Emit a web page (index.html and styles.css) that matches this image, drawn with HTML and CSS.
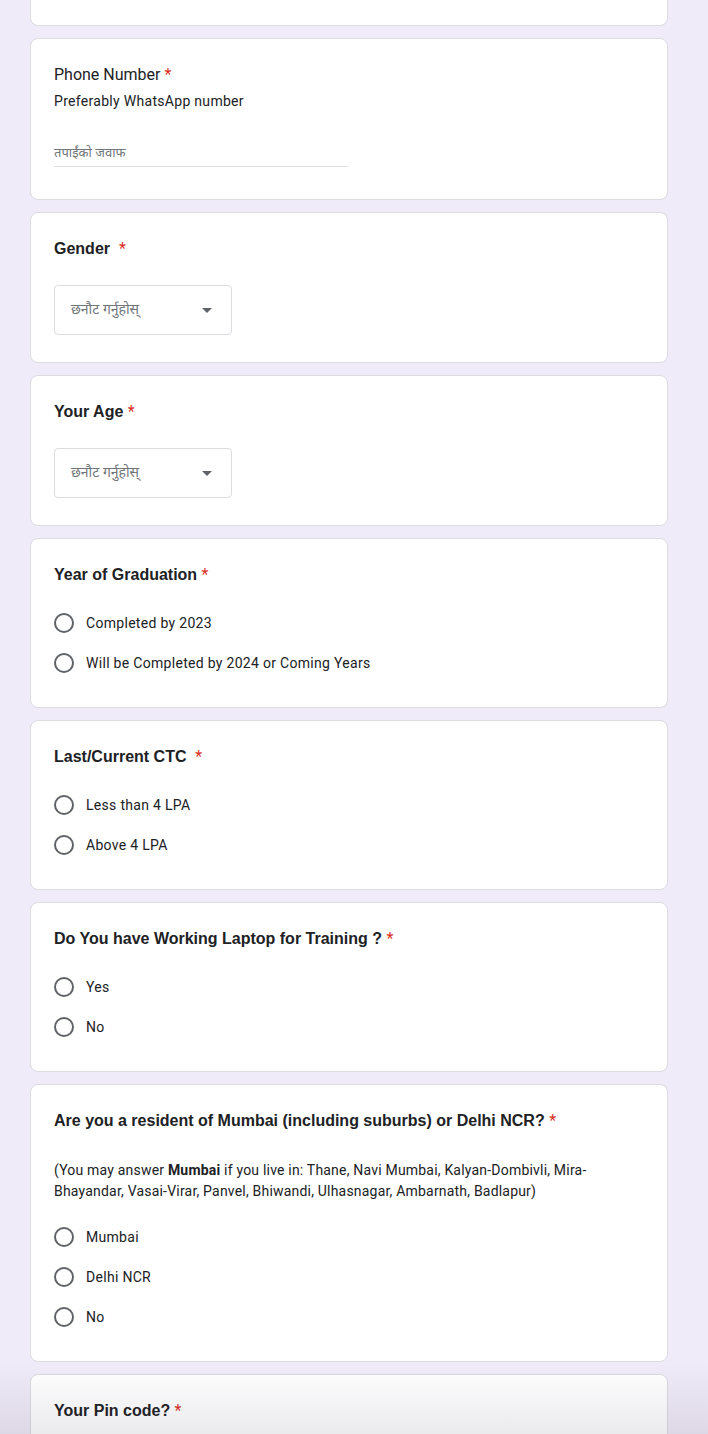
FILE: index.html
```html
<!DOCTYPE html>
<html lang="en">
<head>
<meta charset="utf-8">
<link rel="stylesheet" href="styles.css">
</head>
<body>
<div class="form">
  <div class="card card-top"></div>

  <div class="card card-phone">
    <div class="title title-plain">Phone Number <span class="req">*</span></div>
    <div class="desc">Preferably WhatsApp number</div>
    <div class="text-input">तपाईंको जवाफ</div>
  </div>

  <div class="card">
    <div class="title">Gender &nbsp;<span class="req">*</span></div>
    <div class="select"><span class="select-text">छनौट गर्नुहोस्</span><span class="caret"></span></div>
  </div>

  <div class="card">
    <div class="title">Your Age <span class="req">*</span></div>
    <div class="select"><span class="select-text">छनौट गर्नुहोस्</span><span class="caret"></span></div>
  </div>

  <div class="card">
    <div class="title">Year of Graduation <span class="req">*</span></div>
    <div class="options">
      <div class="option"><span class="radio"></span>Completed by 2023</div>
      <div class="option"><span class="radio"></span>Will be Completed by 2024 or Coming Years</div>
    </div>
  </div>

  <div class="card">
    <div class="title">Last/Current CTC &nbsp;<span class="req">*</span></div>
    <div class="options">
      <div class="option"><span class="radio"></span>Less than 4 LPA</div>
      <div class="option"><span class="radio"></span>Above 4 LPA</div>
    </div>
  </div>

  <div class="card">
    <div class="title">Do You have Working Laptop for Training ? <span class="req">*</span></div>
    <div class="options">
      <div class="option"><span class="radio"></span>Yes</div>
      <div class="option"><span class="radio"></span>No</div>
    </div>
  </div>

  <div class="card">
    <div class="title">Are you a resident of Mumbai (including suburbs) or Delhi NCR? <span class="req">*</span></div>
    <div class="long-desc">(You may answer <b>Mumbai</b> if you live in: Thane, Navi Mumbai, Kalyan-Dombivli, Mira-Bhayandar, Vasai-Virar, Panvel, Bhiwandi, Ulhasnagar, Ambarnath, Badlapur)</div>
    <div class="options options-after-desc">
      <div class="option"><span class="radio"></span>Mumbai</div>
      <div class="option"><span class="radio"></span>Delhi NCR</div>
      <div class="option"><span class="radio"></span>No</div>
    </div>
  </div>

  <div class="card">
    <div class="title">Your Pin code? <span class="req">*</span></div>
    <div class="text-input">तपाईंको जवाफ</div>
  </div>
</div>
<div class="bottom-fade"></div>
</body>
</html>
```

FILE: styles.css
```css
html, body {
  margin: 0;
  padding: 0;
  background: #f0ebf8;
  height: 1434px;
  overflow: hidden;
}

body {
  font-family: Roboto, "Noto Sans", Arial, sans-serif;
  color: #202124;
}

.form {
  width: 638px;
  margin-left: 30px;
  display: flex;
  flex-direction: column;
  gap: 12px;
}

.card {
  box-sizing: border-box;
  background: #fff;
  border: 1px solid #dadce0;
  border-radius: 8px;
  padding: 24px 23px 24px;
}

.card-top {
  height: 26px;
  padding: 0;
  border-top: none;
  border-top-left-radius: 0;
  border-top-right-radius: 0;
}

.card-phone {
  padding-bottom: 32px;
}

.title {
  font-family: "Liberation Sans", Arial, sans-serif;
  font-weight: bold;
  font-size: 16px;
  line-height: 24px;
}

.title-plain {
  font-family: Roboto, Arial, sans-serif;
  font-weight: 400;
}

.req {
  color: #d93025;
  font-family: Roboto, Arial, sans-serif;
  font-weight: 400;
}

.desc {
  font-size: 14px;
  line-height: 20px;
  margin-top: 4px;
  letter-spacing: 0.3px;
}

.text-input {
  width: 294px;
  height: 20px;
  margin-top: 33px;
  padding-bottom: 2px;
  border-bottom: 1px solid #e0e0e0;
  font-family: "Noto Sans Devanagari", "Noto Sans", "Lohit Devanagari", sans-serif;
  font-size: 13px;
  line-height: 20px;
  color: #70757a;
  overflow: hidden;
}

.select {
  box-sizing: border-box;
  width: 178px;
  height: 50px;
  margin-top: 24px;
  margin-bottom: 3px;
  border: 1px solid #dadce0;
  border-radius: 4px;
  display: flex;
  align-items: center;
  justify-content: space-between;
  padding: 0 19px 0 16px;
}

.select-text {
  font-family: "Noto Sans Devanagari", "Noto Sans", "Lohit Devanagari", sans-serif;
  font-size: 14px;
  color: #70757a;
}

.caret {
  width: 0;
  height: 0;
  border-left: 5px solid transparent;
  border-right: 5px solid transparent;
  border-top: 5px solid #5f6368;
}

.options {
  display: flex;
  flex-direction: column;
  margin-top: 16px;
}

.options-after-desc {
  margin-top: 15px;
}

.option {
  height: 40px;
  display: flex;
  align-items: center;
  font-size: 14px;
  letter-spacing: 0.3px;
}

.radio {
  box-sizing: border-box;
  width: 20px;
  height: 20px;
  border: 2px solid #5f6368;
  border-radius: 50%;
  margin-right: 12px;
  flex: none;
}

.long-desc {
  font-size: 14px;
  line-height: 21px;
  margin-top: 27px;
  letter-spacing: 0.2px;
}

.long-desc b {
  font-weight: 700;
}

.bottom-fade {
  position: fixed;
  left: 0;
  right: 0;
  bottom: 0;
  height: 70px;
  background: linear-gradient(to bottom, rgba(60, 50, 80, 0), rgba(60, 50, 80, 0.1));
  pointer-events: none;
}
```
